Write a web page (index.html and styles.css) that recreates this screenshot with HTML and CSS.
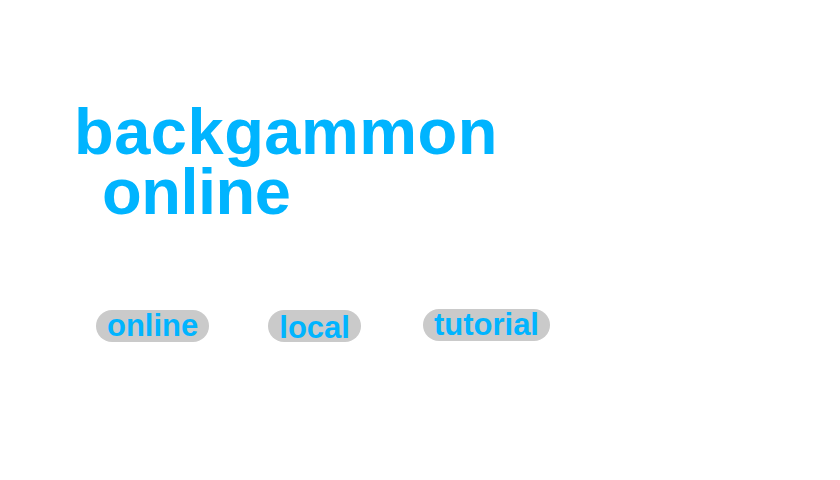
FILE: index.html
```html
<!DOCTYPE html>
<html>
<head>
<meta charset="utf-8">
<link rel="stylesheet" href="styles.css">
</head>
<body>
<main class="page">
  <h1 class="title">
    <span class="title-line">backgammon</span>
    <span class="title-line title-indent">online</span>
  </h1>
  <nav class="menu">
    <a class="pill">online</a>
    <a class="pill pill-local">local</a>
    <a class="pill pill-tutorial">tutorial</a>
  </nav>
</main>
</body>
</html>
```

FILE: styles.css
```css
html, body {
  margin: 0;
  padding: 0;
  background: #ffffff;
}
.page {
  width: 840px;
  height: 480px;
  font-family: "Liberation Sans", Arial, sans-serif;
  font-weight: bold;
  color: #00b4ff;
  padding-top: 102px;
  box-sizing: border-box;
}
.title {
  margin: 0;
  padding-left: 74px;
  font-size: 65px;
  line-height: 60px;
  font-weight: bold;
  letter-spacing: 0.5px;
}
.title-line {
  display: block;
}
.title-indent {
  padding-left: 28px;
  letter-spacing: -0.5px;
}
.menu {
  display: flex;
  align-items: flex-start;
  gap: 59px;
  padding-left: 96px;
  margin-top: 88px;
}
.pill {
  display: block;
  height: 32px;
  padding: 0 11px;
  border-radius: 16px;
  background: #cacaca;
  font-size: 31px;
  line-height: 32px;
  color: #00b4ff;
}
.pill-local {
  line-height: 35px;
}
.pill-tutorial {
  margin-left: 3px;
  margin-top: -1px;
}
```
